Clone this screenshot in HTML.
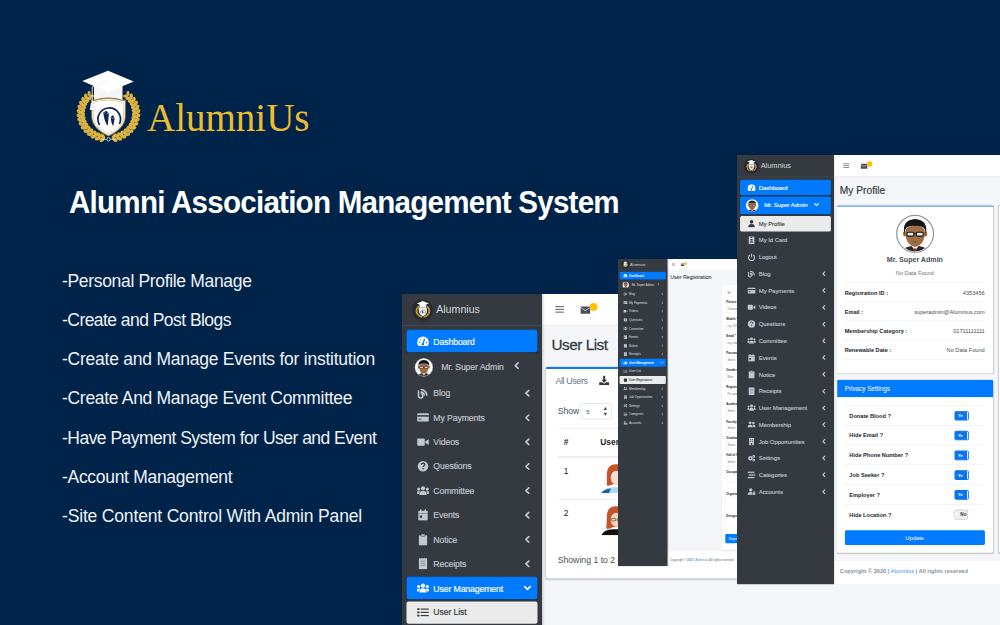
<!DOCTYPE html>
<html><head><meta charset="utf-8"><style>
*{box-sizing:border-box}
html,body{margin:0;padding:0}
body{width:1000px;height:625px;overflow:hidden;background:#00234a;position:relative;font-family:"Liberation Sans",sans-serif}
.ic{position:absolute;overflow:visible}
.brandtxt{position:absolute;left:147px;top:95.5px;font-family:"Liberation Serif",serif;font-size:39px;color:#ecbd2c;line-height:43px;white-space:nowrap}
.heading{position:absolute;left:68.5px;top:186px;font-size:31px;font-weight:bold;color:#fff;white-space:nowrap;letter-spacing:-0.8px;line-height:33px;transform:scaleX(0.954);transform-origin:0 0}
.bul{position:absolute;left:62px;font-size:17.5px;color:#eef2f7;white-space:nowrap;line-height:19px;letter-spacing:-0.4px}
.ss{position:absolute;transform-origin:0 0;overflow:hidden;background:#f4f6f9}
.sb{position:absolute;left:0;top:0;width:250px;background:#343a40;box-shadow:1px 0 6px rgba(0,0,0,.35)}
.brand{height:57px;border-bottom:1px solid #4b545c;position:relative}
.bt{position:absolute;left:61px;top:16px;font-size:19px;color:rgba(255,255,255,.8);line-height:24px}
.nav{padding:7.3px 8px 0}
.it{height:40px;margin-bottom:3.5px;border-radius:4px;position:relative;color:#c2c7d0}
.it.user{height:46px}
.s3 .it{margin-bottom:3.2px}
.it .t{position:absolute;left:48px;top:11.5px;font-size:15.5px;letter-spacing:-0.2px;line-height:18px;white-space:nowrap;-webkit-text-stroke:0.3px currentColor}
.it.user .t{top:12.8px}
.it.act .t{top:12.5px}
.it.act{background:#007bff;color:#fff;box-shadow:0 1px 3px rgba(0,0,0,.12),0 1px 2px rgba(0,0,0,.24)}
.it.sub{background:rgba(255,255,255,.9);color:#343a40}
.main{position:absolute;top:0;right:0;bottom:0;background:#f4f6f9}
.nb{position:relative;background:#fff;border-bottom:1px solid #dee2e6}
.badge{position:absolute;left:85px;top:16px;width:14px;height:14px;border-radius:7px;background:#ffc107}
.h1{position:absolute;color:#343a40;line-height:30px;white-space:nowrap;-webkit-text-stroke:0.45px #343a40}
.card{position:absolute;background:#fff;border-radius:4px;box-shadow:0 0 1px rgba(0,0,0,.125),0 1px 3px rgba(0,0,0,.2)}
.tx{position:absolute;white-space:nowrap;line-height:18px}
.hr{position:absolute;border-top:1px solid #dee2e6;height:0}
.sel,.inp{position:absolute;border:1px solid #ced4da;border-radius:4px;background:#fff}
.btn{position:absolute;background:#007bff;color:#fff;border-radius:4px;text-align:center}
.ctr{position:absolute;left:0;width:100%;text-align:center;line-height:22px;white-space:nowrap}
.phead{position:absolute;left:0;top:0;width:100%;height:45px;background:#007bff}
.tog{position:absolute;width:34px;height:22px;background:#0a74ec;border-radius:3px;border-right:3px solid #fff;box-shadow:0 0 0 1.5px #0a74ec}
.tog span{position:absolute;left:8px;top:4px;font-size:11px;font-weight:bold;color:#fff;line-height:14px}
.tog.off{width:32px;background:#f1f1f1;border-right:none;border-left:4px solid #fff;box-shadow:0 0 0 1.5px #bbb}
.tog.off span{left:10px;top:3.5px;font-size:12px;color:#333}
.foot{position:absolute;left:0;right:0;background:#fff;border-top:1px solid #dee2e6}
</style></head><body>

<svg width="0" height="0" style="position:absolute">
<defs>
<symbol id="i-dash" viewBox="0 0 20 20"><path d="M10,2 A10,10 0 0 0 0,12 Q0,15.5 2.2,18 L17.8,18 Q20,15.5 20,12 A10,10 0 0 0 10,2 Z" fill="currentColor"/><circle cx="4.2" cy="12" r="1.1" fill="#007bff"/><circle cx="6" cy="7.5" r="1.1" fill="#007bff"/><circle cx="15.8" cy="12" r="1.1" fill="#007bff"/><path d="M9.5,15 L12.5,6.5" stroke="#007bff" stroke-width="2.2" stroke-linecap="round"/><circle cx="9.5" cy="15" r="2" fill="#007bff"/></symbol>
<symbol id="i-blog" viewBox="0 0 20 20"><path d="M2.3,5 L2.3,14 A3.7,3.7 0 1 0 6,10.3" fill="none" stroke="currentColor" stroke-width="2.6"/><path d="M6,2 A12,12 0 0 1 18,14 L15.2,14 A9.2,9.2 0 0 0 6,4.8 Z" fill="currentColor"/><path d="M6,6.4 A7.6,7.6 0 0 1 13.6,14 L10.9,14 A4.9,4.9 0 0 0 6,9.1 Z" fill="currentColor"/></symbol>
<symbol id="i-card" viewBox="0 0 20 20"><rect x="0" y="3" width="20" height="14" rx="1.5" fill="currentColor"/><rect x="0" y="6" width="20" height="2.6" fill="#343a40"/><rect x="2.5" y="12" width="5" height="1.6" fill="#343a40"/></symbol>
<symbol id="i-video" viewBox="0 0 20 20"><rect x="0" y="4" width="13" height="12" rx="1.5" fill="currentColor"/><path d="M14,8.5 L20,5 L20,15 L14,11.5 Z" fill="currentColor"/></symbol>
<symbol id="i-quest" viewBox="0 0 20 20"><circle cx="10" cy="10" r="9" fill="currentColor"/><path d="M7.2,7.6 Q7.4,4.8 10.2,4.8 Q13,4.9 13,7.3 Q13,9 11,9.8 Q10.2,10.3 10.2,11.5" fill="none" stroke="#343a40" stroke-width="2"/><circle cx="10.2" cy="14.5" r="1.3" fill="#343a40"/></symbol>
<symbol id="i-users" viewBox="0 0 20 20"><circle cx="10" cy="5.6" r="3.6" fill="currentColor"/><circle cx="2.6" cy="7" r="2.7" fill="currentColor"/><circle cx="17.4" cy="7" r="2.7" fill="currentColor"/><path d="M4,17 Q4,10 10,10 Q16,10 16,17 Z" fill="currentColor"/><path d="M-2.5,15.5 Q-2.5,10.5 2.8,10.5 Q4.5,10.5 5.2,11.2 Q3.2,13 3.2,15.5 Z" fill="currentColor"/><path d="M22.5,15.5 Q22.5,10.5 17.2,10.5 Q15.5,10.5 14.8,11.2 Q16.8,13 16.8,15.5 Z" fill="currentColor"/></symbol>
<symbol id="i-cal" viewBox="0 0 20 20"><rect x="2" y="3" width="16" height="16.5" rx="1.5" fill="currentColor"/><rect x="5" y="0.5" width="2.4" height="4" rx="1" fill="currentColor"/><rect x="12.6" y="0.5" width="2.4" height="4" rx="1" fill="currentColor"/><rect x="2" y="7" width="16" height="1" fill="#343a40" opacity=".6"/><rect x="4.5" y="11" width="4" height="4" fill="#343a40"/></symbol>
<symbol id="i-clip" viewBox="0 0 20 20"><rect x="3" y="2.5" width="14" height="17.5" rx="1.5" fill="currentColor"/><rect x="6.5" y="0.5" width="7" height="4" rx="1.5" fill="currentColor" stroke="#343a40" stroke-width="1"/></symbol>
<symbol id="i-receipt" viewBox="0 0 20 20"><rect x="3" y="1" width="14" height="18.5" rx="1" fill="currentColor"/><rect x="6" y="5" width="8" height="1.2" fill="#343a40" opacity=".5"/><rect x="6" y="8.5" width="8" height="1.2" fill="#343a40" opacity=".5"/><rect x="6" y="12" width="8" height="1.2" fill="#343a40" opacity=".5"/></symbol>
<symbol id="i-list" viewBox="0 0 20 20"><rect x="0" y="3" width="4" height="3" fill="currentColor"/><rect x="0" y="8.5" width="4" height="3" fill="currentColor"/><rect x="0" y="14" width="4" height="3" fill="currentColor"/><rect x="6" y="3.5" width="14" height="2" fill="currentColor"/><rect x="6" y="9" width="14" height="2" fill="currentColor"/><rect x="6" y="14.5" width="14" height="2" fill="currentColor"/></symbol>
<symbol id="i-user" viewBox="0 0 20 20"><circle cx="10" cy="6" r="4.5" fill="currentColor"/><path d="M2,19 Q2,11.5 10,11.5 Q18,11.5 18,19 Z" fill="currentColor"/></symbol>
<symbol id="i-ucirc" viewBox="0 0 20 20"><circle cx="10" cy="10" r="9" fill="currentColor"/><circle cx="10" cy="8" r="3" fill="#343a40"/><path d="M4.5,16 Q5,12 10,12 Q15,12 15.5,16 Z" fill="#343a40"/></symbol>
<symbol id="i-friends" viewBox="0 0 20 20"><circle cx="6.5" cy="6" r="3.5" fill="currentColor"/><circle cx="14.5" cy="6.5" r="3" fill="currentColor"/><path d="M0,17 Q0,11 6.5,11 Q13,11 13,17 Z" fill="currentColor"/><path d="M14,17 Q14,13 12.5,11.5 Q13.5,11 14.5,11 Q20,11 20,17 Z" fill="currentColor"/></symbol>
<symbol id="i-build" viewBox="0 0 20 20"><rect x="4" y="1" width="12" height="19" rx="1" fill="currentColor"/><rect x="6.5" y="4" width="2" height="2" fill="#343a40"/><rect x="11.5" y="4" width="2" height="2" fill="#343a40"/><rect x="6.5" y="8" width="2" height="2" fill="#343a40"/><rect x="11.5" y="8" width="2" height="2" fill="#343a40"/><rect x="8.5" y="14" width="3" height="6" fill="#343a40"/></symbol>
<symbol id="i-cogs" viewBox="0 0 20 20"><circle cx="7" cy="10" r="5.5" fill="currentColor"/><circle cx="7" cy="10" r="2" fill="#343a40"/><circle cx="15.5" cy="5.5" r="3.5" fill="currentColor"/><circle cx="15.5" cy="14.5" r="3.5" fill="currentColor"/><circle cx="15.5" cy="5.5" r="1.2" fill="#343a40"/><circle cx="15.5" cy="14.5" r="1.2" fill="#343a40"/></symbol>
<symbol id="i-stream" viewBox="0 0 20 20"><rect x="0" y="2" width="17" height="3" fill="currentColor"/><rect x="3" y="8.5" width="17" height="3" fill="currentColor"/><rect x="0" y="15" width="17" height="3" fill="currentColor"/></symbol>
<symbol id="i-acct" viewBox="0 0 20 20"><circle cx="8" cy="6" r="4" fill="currentColor"/><path d="M0,18 Q0,11 8,11 Q11,11 12,12 L12,18 Z" fill="currentColor"/><rect x="13" y="12" width="7" height="6" fill="currentColor"/><path d="M14.5,12 L14.5,10.5 A2,2 0 0 1 18.5,10.5 L18.5,12" fill="none" stroke="currentColor" stroke-width="1.3"/></symbol>
<symbol id="i-id" viewBox="0 0 20 20"><rect x="3" y="1" width="14" height="19" rx="1.5" fill="currentColor"/><rect x="8" y="2" width="4" height="2" fill="#343a40"/><circle cx="10" cy="9" r="2.5" fill="#343a40"/><path d="M5.5,16 Q6,12.5 10,12.5 Q14,12.5 14.5,16 Z" fill="#343a40"/></symbol>
<symbol id="i-power" viewBox="0 0 20 20"><path d="M6,4.5 A7.5,7.5 0 1 0 14,4.5" fill="none" stroke="currentColor" stroke-width="2.6"/><rect x="8.7" y="1" width="2.6" height="9" rx="1" fill="currentColor"/></symbol>
<symbol id="i-left" viewBox="0 0 20 20"><path d="M13.5,3 L6,10 L13.5,17" fill="none" stroke="currentColor" stroke-width="4.2" stroke-linejoin="round" stroke-linecap="round"/></symbol>
<symbol id="i-down" viewBox="0 0 20 20"><path d="M3,6.5 L10,13.5 L17,6.5" fill="none" stroke="currentColor" stroke-width="4.2" stroke-linejoin="round" stroke-linecap="round"/></symbol>
<symbol id="i-ham" viewBox="0 0 20 20"><rect x="1" y="3" width="18" height="2.4" fill="currentColor"/><rect x="1" y="8.8" width="18" height="2.4" fill="currentColor"/><rect x="1" y="14.6" width="18" height="2.4" fill="currentColor"/></symbol>
<symbol id="i-mail" viewBox="0 0 20 20"><path d="M1,6 L10,12 L19,6 L19,17 L1,17 Z" fill="currentColor"/><path d="M1,3.5 L19,3.5 L19,4.8 L10,10.5 L1,4.8 Z" fill="currentColor"/></symbol>
<symbol id="i-dl" viewBox="0 0 20 20"><rect x="8" y="1" width="4" height="9" fill="currentColor"/><path d="M4,9 L16,9 L10,15 Z" fill="currentColor"/><path d="M0,14 L6,14 L10,17 L14,14 L20,14 L20,20 L0,20 Z" fill="currentColor"/></symbol>
<symbol id="i-man" viewBox="0 0 100 100"><circle cx="50" cy="50" r="47.5" fill="#fff" stroke="#8f969c" stroke-width="3"/>
<clipPath id="cpm"><circle cx="50" cy="50" r="45"/></clipPath>
<g clip-path="url(#cpm)"><path d="M14,100 Q18,82 50,80 Q82,82 86,100 Z" fill="#25282d"/><path d="M40,80 L50,94 L60,80 Z" fill="#fff"/><circle cx="50" cy="91" r="3.5" fill="#d81f26"/>
<ellipse cx="23" cy="50" rx="4" ry="7" fill="#8f5f3a"/><ellipse cx="77" cy="50" rx="4" ry="7" fill="#8f5f3a"/>
<path d="M25,45 Q25,80 50,84 Q75,80 75,45 Q75,30 50,28 Q25,30 25,45 Z" fill="#a06e45"/>
<path d="M22,50 Q16,14 50,12 Q84,14 78,50 Q76,38 72,34 Q60,28 50,30 Q38,28 28,34 Q24,38 22,50 Z" fill="#151515"/>
<rect x="29" y="46" width="18" height="10" rx="3" fill="#e8e8e8" stroke="#151515" stroke-width="3"/><rect x="53" y="46" width="18" height="10" rx="3" fill="#e8e8e8" stroke="#151515" stroke-width="3"/><path d="M47,50 L53,50" stroke="#151515" stroke-width="2.5"/>
<path d="M44,70 Q50,73 56,70" stroke="#6b4428" stroke-width="2" fill="none"/></g></symbol>
<symbol id="i-woman" viewBox="0 0 100 100"><path d="M2,100 Q8,82 40,80 L60,80 Q92,82 98,100 Z" fill="#111"/><path d="M20,45 Q18,2 52,4 Q84,6 82,45 L84,78 Q70,80 62,72 L40,72 Q30,80 18,78 Z" fill="#c4542a"/><ellipse cx="52" cy="48" rx="19" ry="24" fill="#f6d2b8"/><path d="M30,40 Q34,12 56,14 Q76,16 74,40 Q62,22 44,26 Q36,30 30,40 Z" fill="#c4542a"/><rect x="36" y="44" width="13" height="8" rx="2" fill="none" stroke="#333" stroke-width="2"/><rect x="54" y="44" width="13" height="8" rx="2" fill="none" stroke="#333" stroke-width="2"/></symbol>
<symbol id="i-woman2" viewBox="0 0 100 100"><path d="M2,100 Q8,82 40,80 L60,80 Q92,82 98,100 Z" fill="#a9dcef"/><path d="M0,100 Q10,86 34,84 L26,100 Z" fill="#1d5fa8"/><path d="M20,45 Q18,2 52,4 Q84,6 82,45 L82,74 Q70,76 62,70 L40,70 Q30,76 20,74 Z" fill="#c4542a"/><ellipse cx="52" cy="48" rx="19" ry="24" fill="#f9ddd0"/><path d="M30,40 Q34,12 56,14 Q76,16 74,40 Q62,22 44,26 Q36,30 30,40 Z" fill="#c4542a"/></symbol>
<symbol id="i-logo" viewBox="70 62 75 82">
<g fill="#dcb243"><ellipse cx="89.05" cy="93.50" rx="2.63" ry="1.53" transform="rotate(-84.4 89.05 93.50)"/>
<ellipse cx="91.41" cy="95.95" rx="2.63" ry="1.53" transform="rotate(-0.5 91.41 95.95)"/>
<ellipse cx="85.87" cy="96.51" rx="3.10" ry="1.80" transform="rotate(-93.5 85.87 96.51)"/>
<ellipse cx="88.58" cy="98.56" rx="3.10" ry="1.80" transform="rotate(-9.5 88.58 98.56)"/>
<ellipse cx="83.24" cy="99.93" rx="3.10" ry="1.80" transform="rotate(-102.7 83.24 99.93)"/>
<ellipse cx="86.24" cy="101.53" rx="3.10" ry="1.80" transform="rotate(-18.7 86.24 101.53)"/>
<ellipse cx="81.22" cy="103.69" rx="3.10" ry="1.80" transform="rotate(-112.0 81.22 103.69)"/>
<ellipse cx="84.44" cy="104.79" rx="3.10" ry="1.80" transform="rotate(-28.0 84.44 104.79)"/>
<ellipse cx="79.87" cy="107.69" rx="3.10" ry="1.80" transform="rotate(-121.4 79.87 107.69)"/>
<ellipse cx="83.22" cy="108.28" rx="3.10" ry="1.80" transform="rotate(-37.5 83.22 108.28)"/>
<ellipse cx="79.23" cy="111.83" rx="3.10" ry="1.80" transform="rotate(-130.9 79.23 111.83)"/>
<ellipse cx="82.63" cy="111.89" rx="3.10" ry="1.80" transform="rotate(-47.0 82.63 111.89)"/>
<ellipse cx="79.30" cy="116.03" rx="3.10" ry="1.80" transform="rotate(-140.4 79.30 116.03)"/>
<ellipse cx="82.67" cy="115.56" rx="3.10" ry="1.80" transform="rotate(-56.5 82.67 115.56)"/>
<ellipse cx="80.10" cy="120.17" rx="3.10" ry="1.80" transform="rotate(-149.9 80.10 120.17)"/>
<ellipse cx="83.35" cy="119.18" rx="3.10" ry="1.80" transform="rotate(-65.9 83.35 119.18)"/>
<ellipse cx="81.60" cy="124.15" rx="3.10" ry="1.80" transform="rotate(-159.3 81.60 124.15)"/>
<ellipse cx="84.65" cy="122.66" rx="3.10" ry="1.80" transform="rotate(-75.3 84.65 122.66)"/>
<ellipse cx="83.76" cy="127.87" rx="3.10" ry="1.80" transform="rotate(-168.5 83.76 127.87)"/>
<ellipse cx="86.55" cy="125.91" rx="3.10" ry="1.80" transform="rotate(-84.5 86.55 125.91)"/>
<ellipse cx="86.55" cy="131.23" rx="3.10" ry="1.80" transform="rotate(-177.5 86.55 131.23)"/>
<ellipse cx="88.99" cy="128.86" rx="3.10" ry="1.80" transform="rotate(-93.6 88.99 128.86)"/>
<ellipse cx="89.88" cy="134.15" rx="3.10" ry="1.80" transform="rotate(173.5 89.88 134.15)"/>
<ellipse cx="91.92" cy="131.43" rx="3.10" ry="1.80" transform="rotate(-102.5 91.92 131.43)"/>
<ellipse cx="93.66" cy="136.55" rx="3.10" ry="1.80" transform="rotate(164.8 93.66 136.55)"/>
<ellipse cx="95.26" cy="133.55" rx="3.10" ry="1.80" transform="rotate(-111.3 95.26 133.55)"/>
<ellipse cx="97.82" cy="138.39" rx="3.10" ry="1.80" transform="rotate(156.1 97.82 138.39)"/>
<ellipse cx="98.92" cy="135.17" rx="3.10" ry="1.80" transform="rotate(-119.9 98.92 135.17)"/>
<ellipse cx="102.23" cy="139.61" rx="3.10" ry="1.80" transform="rotate(147.5 102.23 139.61)"/>
<ellipse cx="102.82" cy="136.26" rx="3.10" ry="1.80" transform="rotate(-128.5 102.82 136.26)"/>
<ellipse cx="127.95" cy="93.50" rx="2.63" ry="1.53" transform="rotate(-95.6 127.95 93.50)"/>
<ellipse cx="125.59" cy="95.95" rx="2.63" ry="1.53" transform="rotate(-179.5 125.59 95.95)"/>
<ellipse cx="131.13" cy="96.51" rx="3.10" ry="1.80" transform="rotate(-86.5 131.13 96.51)"/>
<ellipse cx="128.42" cy="98.56" rx="3.10" ry="1.80" transform="rotate(-170.5 128.42 98.56)"/>
<ellipse cx="133.76" cy="99.93" rx="3.10" ry="1.80" transform="rotate(-77.3 133.76 99.93)"/>
<ellipse cx="130.76" cy="101.53" rx="3.10" ry="1.80" transform="rotate(-161.3 130.76 101.53)"/>
<ellipse cx="135.78" cy="103.69" rx="3.10" ry="1.80" transform="rotate(-68.0 135.78 103.69)"/>
<ellipse cx="132.56" cy="104.79" rx="3.10" ry="1.80" transform="rotate(-152.0 132.56 104.79)"/>
<ellipse cx="137.13" cy="107.69" rx="3.10" ry="1.80" transform="rotate(-58.6 137.13 107.69)"/>
<ellipse cx="133.78" cy="108.28" rx="3.10" ry="1.80" transform="rotate(-142.5 133.78 108.28)"/>
<ellipse cx="137.77" cy="111.83" rx="3.10" ry="1.80" transform="rotate(-49.1 137.77 111.83)"/>
<ellipse cx="134.37" cy="111.89" rx="3.10" ry="1.80" transform="rotate(-133.0 134.37 111.89)"/>
<ellipse cx="137.70" cy="116.03" rx="3.10" ry="1.80" transform="rotate(-39.6 137.70 116.03)"/>
<ellipse cx="134.33" cy="115.56" rx="3.10" ry="1.80" transform="rotate(-123.5 134.33 115.56)"/>
<ellipse cx="136.90" cy="120.17" rx="3.10" ry="1.80" transform="rotate(-30.1 136.90 120.17)"/>
<ellipse cx="133.65" cy="119.18" rx="3.10" ry="1.80" transform="rotate(-114.1 133.65 119.18)"/>
<ellipse cx="135.40" cy="124.15" rx="3.10" ry="1.80" transform="rotate(-20.7 135.40 124.15)"/>
<ellipse cx="132.35" cy="122.66" rx="3.10" ry="1.80" transform="rotate(-104.7 132.35 122.66)"/>
<ellipse cx="133.24" cy="127.87" rx="3.10" ry="1.80" transform="rotate(-11.5 133.24 127.87)"/>
<ellipse cx="130.45" cy="125.91" rx="3.10" ry="1.80" transform="rotate(-95.5 130.45 125.91)"/>
<ellipse cx="130.45" cy="131.23" rx="3.10" ry="1.80" transform="rotate(-2.5 130.45 131.23)"/>
<ellipse cx="128.01" cy="128.86" rx="3.10" ry="1.80" transform="rotate(-86.4 128.01 128.86)"/>
<ellipse cx="127.12" cy="134.15" rx="3.10" ry="1.80" transform="rotate(6.5 127.12 134.15)"/>
<ellipse cx="125.08" cy="131.43" rx="3.10" ry="1.80" transform="rotate(-77.5 125.08 131.43)"/>
<ellipse cx="123.34" cy="136.55" rx="3.10" ry="1.80" transform="rotate(15.2 123.34 136.55)"/>
<ellipse cx="121.74" cy="133.55" rx="3.10" ry="1.80" transform="rotate(-68.7 121.74 133.55)"/>
<ellipse cx="119.18" cy="138.39" rx="3.10" ry="1.80" transform="rotate(23.9 119.18 138.39)"/>
<ellipse cx="118.08" cy="135.17" rx="3.10" ry="1.80" transform="rotate(-60.1 118.08 135.17)"/>
<ellipse cx="114.77" cy="139.61" rx="3.10" ry="1.80" transform="rotate(32.5 114.77 139.61)"/>
<ellipse cx="114.18" cy="136.26" rx="3.10" ry="1.80" transform="rotate(-51.5 114.18 136.26)"/>
</g>
<path d="M101,139.3 L106.5,139.3 M110.5,139.3 L116,139.3" stroke="#e8e8e8" stroke-width="0.7" fill="none"/>
<circle cx="108.5" cy="139.3" r="1.7" fill="none" stroke="#e8e8e8" stroke-width="0.8"/>
<path d="M91,100 Q108.5,95.5 126,100 L125.8,117 Q125,129 108.5,136.5 Q92,129 91.2,117 Z" fill="#8e7a44"/>
<path d="M92,101.2 Q108.5,96.8 125,101.2 L124.8,117 Q124,128.3 108.5,135.4 Q93,128.3 92.2,117 Z" fill="#fff"/>
<path d="M93.2,102.3 Q108.5,98.2 123.8,102.3 L123.6,117 Q123,127.5 108.5,134.2 Q94,127.5 93.4,117 Z" fill="none" stroke="#c9a94e" stroke-width="0.5"/>
<path d="M99.5,125 A11.3,11.3 0 1 1 119.5,124" fill="none" stroke="#0b2550" stroke-width="1.7"/>
<circle cx="106" cy="112.6" r="1.7" fill="#0b2550"/>
<path d="M103.2,111.5 Q105.8,116 109.2,112.8 L108.6,116 Q108.2,122 107.6,126 Q104,121 103.2,111.5 Z" fill="#0b2550"/>
<circle cx="112.6" cy="117" r="1.4" fill="#0b2550"/>
<path d="M110.6,117 Q112.6,120 114.8,117.6 L113.3,126 Q111.2,124 110.6,117 Z" fill="#0b2550"/>
<path d="M94,85 L94,100.5 Q108.5,96 122.5,100.5 L122.5,85 Z" fill="#f6f6f6"/>
<path d="M94,100.3 Q108.5,95.8 122.5,100.3" stroke="#8e7a44" stroke-width="1.1" fill="none"/>
<path d="M82.3,81 L108,70.8 L133.7,81.5 L108,92.3 Z" fill="#fff"/>
<path d="M108,81.5 L92.2,87 L92.2,104" stroke="#f0f0f0" stroke-width="0.9" fill="none"/>
<path d="M90.8,103 L93.6,103 L94.2,110 L89.8,110 Z" fill="#f0f0f0"/>
</symbol>
</defs></svg>

<svg id="biglogo" width="75" height="82" viewBox="70 62 75 82" style="position:absolute;left:70px;top:62px">
<g fill="#dcb243"><ellipse cx="89.05" cy="93.50" rx="2.63" ry="1.53" transform="rotate(-84.4 89.05 93.50)"/>
<ellipse cx="91.41" cy="95.95" rx="2.63" ry="1.53" transform="rotate(-0.5 91.41 95.95)"/>
<ellipse cx="85.87" cy="96.51" rx="3.10" ry="1.80" transform="rotate(-93.5 85.87 96.51)"/>
<ellipse cx="88.58" cy="98.56" rx="3.10" ry="1.80" transform="rotate(-9.5 88.58 98.56)"/>
<ellipse cx="83.24" cy="99.93" rx="3.10" ry="1.80" transform="rotate(-102.7 83.24 99.93)"/>
<ellipse cx="86.24" cy="101.53" rx="3.10" ry="1.80" transform="rotate(-18.7 86.24 101.53)"/>
<ellipse cx="81.22" cy="103.69" rx="3.10" ry="1.80" transform="rotate(-112.0 81.22 103.69)"/>
<ellipse cx="84.44" cy="104.79" rx="3.10" ry="1.80" transform="rotate(-28.0 84.44 104.79)"/>
<ellipse cx="79.87" cy="107.69" rx="3.10" ry="1.80" transform="rotate(-121.4 79.87 107.69)"/>
<ellipse cx="83.22" cy="108.28" rx="3.10" ry="1.80" transform="rotate(-37.5 83.22 108.28)"/>
<ellipse cx="79.23" cy="111.83" rx="3.10" ry="1.80" transform="rotate(-130.9 79.23 111.83)"/>
<ellipse cx="82.63" cy="111.89" rx="3.10" ry="1.80" transform="rotate(-47.0 82.63 111.89)"/>
<ellipse cx="79.30" cy="116.03" rx="3.10" ry="1.80" transform="rotate(-140.4 79.30 116.03)"/>
<ellipse cx="82.67" cy="115.56" rx="3.10" ry="1.80" transform="rotate(-56.5 82.67 115.56)"/>
<ellipse cx="80.10" cy="120.17" rx="3.10" ry="1.80" transform="rotate(-149.9 80.10 120.17)"/>
<ellipse cx="83.35" cy="119.18" rx="3.10" ry="1.80" transform="rotate(-65.9 83.35 119.18)"/>
<ellipse cx="81.60" cy="124.15" rx="3.10" ry="1.80" transform="rotate(-159.3 81.60 124.15)"/>
<ellipse cx="84.65" cy="122.66" rx="3.10" ry="1.80" transform="rotate(-75.3 84.65 122.66)"/>
<ellipse cx="83.76" cy="127.87" rx="3.10" ry="1.80" transform="rotate(-168.5 83.76 127.87)"/>
<ellipse cx="86.55" cy="125.91" rx="3.10" ry="1.80" transform="rotate(-84.5 86.55 125.91)"/>
<ellipse cx="86.55" cy="131.23" rx="3.10" ry="1.80" transform="rotate(-177.5 86.55 131.23)"/>
<ellipse cx="88.99" cy="128.86" rx="3.10" ry="1.80" transform="rotate(-93.6 88.99 128.86)"/>
<ellipse cx="89.88" cy="134.15" rx="3.10" ry="1.80" transform="rotate(173.5 89.88 134.15)"/>
<ellipse cx="91.92" cy="131.43" rx="3.10" ry="1.80" transform="rotate(-102.5 91.92 131.43)"/>
<ellipse cx="93.66" cy="136.55" rx="3.10" ry="1.80" transform="rotate(164.8 93.66 136.55)"/>
<ellipse cx="95.26" cy="133.55" rx="3.10" ry="1.80" transform="rotate(-111.3 95.26 133.55)"/>
<ellipse cx="97.82" cy="138.39" rx="3.10" ry="1.80" transform="rotate(156.1 97.82 138.39)"/>
<ellipse cx="98.92" cy="135.17" rx="3.10" ry="1.80" transform="rotate(-119.9 98.92 135.17)"/>
<ellipse cx="102.23" cy="139.61" rx="3.10" ry="1.80" transform="rotate(147.5 102.23 139.61)"/>
<ellipse cx="102.82" cy="136.26" rx="3.10" ry="1.80" transform="rotate(-128.5 102.82 136.26)"/>
<ellipse cx="127.95" cy="93.50" rx="2.63" ry="1.53" transform="rotate(-95.6 127.95 93.50)"/>
<ellipse cx="125.59" cy="95.95" rx="2.63" ry="1.53" transform="rotate(-179.5 125.59 95.95)"/>
<ellipse cx="131.13" cy="96.51" rx="3.10" ry="1.80" transform="rotate(-86.5 131.13 96.51)"/>
<ellipse cx="128.42" cy="98.56" rx="3.10" ry="1.80" transform="rotate(-170.5 128.42 98.56)"/>
<ellipse cx="133.76" cy="99.93" rx="3.10" ry="1.80" transform="rotate(-77.3 133.76 99.93)"/>
<ellipse cx="130.76" cy="101.53" rx="3.10" ry="1.80" transform="rotate(-161.3 130.76 101.53)"/>
<ellipse cx="135.78" cy="103.69" rx="3.10" ry="1.80" transform="rotate(-68.0 135.78 103.69)"/>
<ellipse cx="132.56" cy="104.79" rx="3.10" ry="1.80" transform="rotate(-152.0 132.56 104.79)"/>
<ellipse cx="137.13" cy="107.69" rx="3.10" ry="1.80" transform="rotate(-58.6 137.13 107.69)"/>
<ellipse cx="133.78" cy="108.28" rx="3.10" ry="1.80" transform="rotate(-142.5 133.78 108.28)"/>
<ellipse cx="137.77" cy="111.83" rx="3.10" ry="1.80" transform="rotate(-49.1 137.77 111.83)"/>
<ellipse cx="134.37" cy="111.89" rx="3.10" ry="1.80" transform="rotate(-133.0 134.37 111.89)"/>
<ellipse cx="137.70" cy="116.03" rx="3.10" ry="1.80" transform="rotate(-39.6 137.70 116.03)"/>
<ellipse cx="134.33" cy="115.56" rx="3.10" ry="1.80" transform="rotate(-123.5 134.33 115.56)"/>
<ellipse cx="136.90" cy="120.17" rx="3.10" ry="1.80" transform="rotate(-30.1 136.90 120.17)"/>
<ellipse cx="133.65" cy="119.18" rx="3.10" ry="1.80" transform="rotate(-114.1 133.65 119.18)"/>
<ellipse cx="135.40" cy="124.15" rx="3.10" ry="1.80" transform="rotate(-20.7 135.40 124.15)"/>
<ellipse cx="132.35" cy="122.66" rx="3.10" ry="1.80" transform="rotate(-104.7 132.35 122.66)"/>
<ellipse cx="133.24" cy="127.87" rx="3.10" ry="1.80" transform="rotate(-11.5 133.24 127.87)"/>
<ellipse cx="130.45" cy="125.91" rx="3.10" ry="1.80" transform="rotate(-95.5 130.45 125.91)"/>
<ellipse cx="130.45" cy="131.23" rx="3.10" ry="1.80" transform="rotate(-2.5 130.45 131.23)"/>
<ellipse cx="128.01" cy="128.86" rx="3.10" ry="1.80" transform="rotate(-86.4 128.01 128.86)"/>
<ellipse cx="127.12" cy="134.15" rx="3.10" ry="1.80" transform="rotate(6.5 127.12 134.15)"/>
<ellipse cx="125.08" cy="131.43" rx="3.10" ry="1.80" transform="rotate(-77.5 125.08 131.43)"/>
<ellipse cx="123.34" cy="136.55" rx="3.10" ry="1.80" transform="rotate(15.2 123.34 136.55)"/>
<ellipse cx="121.74" cy="133.55" rx="3.10" ry="1.80" transform="rotate(-68.7 121.74 133.55)"/>
<ellipse cx="119.18" cy="138.39" rx="3.10" ry="1.80" transform="rotate(23.9 119.18 138.39)"/>
<ellipse cx="118.08" cy="135.17" rx="3.10" ry="1.80" transform="rotate(-60.1 118.08 135.17)"/>
<ellipse cx="114.77" cy="139.61" rx="3.10" ry="1.80" transform="rotate(32.5 114.77 139.61)"/>
<ellipse cx="114.18" cy="136.26" rx="3.10" ry="1.80" transform="rotate(-51.5 114.18 136.26)"/>
</g>
<path d="M101,139.3 L106.5,139.3 M110.5,139.3 L116,139.3" stroke="#e8e8e8" stroke-width="0.7" fill="none"/>
<circle cx="108.5" cy="139.3" r="1.7" fill="none" stroke="#e8e8e8" stroke-width="0.8"/>
<path d="M91,100 Q108.5,95.5 126,100 L125.8,117 Q125,129 108.5,136.5 Q92,129 91.2,117 Z" fill="#8e7a44"/>
<path d="M92,101.2 Q108.5,96.8 125,101.2 L124.8,117 Q124,128.3 108.5,135.4 Q93,128.3 92.2,117 Z" fill="#fff"/>
<path d="M93.2,102.3 Q108.5,98.2 123.8,102.3 L123.6,117 Q123,127.5 108.5,134.2 Q94,127.5 93.4,117 Z" fill="none" stroke="#c9a94e" stroke-width="0.5"/>
<path d="M99.5,125 A11.3,11.3 0 1 1 119.5,124" fill="none" stroke="#0b2550" stroke-width="1.7"/>
<circle cx="106" cy="112.6" r="1.7" fill="#0b2550"/>
<path d="M103.2,111.5 Q105.8,116 109.2,112.8 L108.6,116 Q108.2,122 107.6,126 Q104,121 103.2,111.5 Z" fill="#0b2550"/>
<circle cx="112.6" cy="117" r="1.4" fill="#0b2550"/>
<path d="M110.6,117 Q112.6,120 114.8,117.6 L113.3,126 Q111.2,124 110.6,117 Z" fill="#0b2550"/>
<path d="M94,85 L94,100.5 Q108.5,96 122.5,100.5 L122.5,85 Z" fill="#f6f6f6"/>
<path d="M94,100.3 Q108.5,95.8 122.5,100.3" stroke="#8e7a44" stroke-width="1.1" fill="none"/>
<path d="M82.3,81 L108,70.8 L133.7,81.5 L108,92.3 Z" fill="#fff"/>
<path d="M108,81.5 L92.2,87 L92.2,104" stroke="#f0f0f0" stroke-width="0.9" fill="none"/>
<path d="M90.8,103 L93.6,103 L94.2,110 L89.8,110 Z" fill="#f0f0f0"/>
</svg>
<div class="brandtxt">AlumniUs</div>
<div class="heading">Alumni Association Management System</div>
<div class="bul" style="top:271.5px;letter-spacing:-0.329px">-Personal Profile Manage</div><div class="bul" style="top:310.8px;letter-spacing:-0.545px">-Create and Post Blogs</div><div class="bul" style="top:350.1px;letter-spacing:-0.241px">-Create and Manage Events for institution</div><div class="bul" style="top:389.4px;letter-spacing:-0.306px">-Create And Manage Event Committee</div><div class="bul" style="top:428.7px;letter-spacing:-0.521px">-Have Payment System for User and Event</div><div class="bul" style="top:468.0px;letter-spacing:-0.3px">-Account Management</div><div class="bul" style="top:507.3px;letter-spacing:-0.168px">-Site Content Control With Admin Panel</div>
<div class="ss" style="left:402px;top:294px;width:1070px;height:592px;transform:scale(0.56)">
<div class="main" style="left:250px"><div class="nb" style="height:57px"><svg class="ic" style="left:23px;top:19px;width:17px;height:17px;color:#6c757d;"><use href="#i-ham"/></svg><svg class="ic" style="left:68px;top:19px;width:19px;height:19px;color:#495057;"><use href="#i-mail"/></svg><div class="badge"></div></div>
<div class="h1" style="left:17px;top:76px;font-size:27.5px;letter-spacing:-0.95px">User List</div>
<div class="card" style="left:7px;top:129.5px;width:900px;height:378.5px;border-top:4px solid #0a7cf0">
<span class="tx" style="left:17px;top:12px;font-size:16px;letter-spacing:-0.75px;color:#6c757d">All Users</span>
<svg class="ic" style="left:95px;top:11px;width:18px;height:18px;color:#343a40;"><use href="#i-dl"/></svg>
<span class="tx" style="left:21px;top:66px;font-size:15.5px;color:#495057">Show</span>
<div class="sel" style="left:62px;top:61px;width:56px;height:29px"><span class="tx" style="left:9px;top:6px;font-size:11px;color:#495057">5</span><span class="tx" style="left:38px;top:4px;font-size:10px;color:#495057;line-height:10px">&#9650;<br>&#9660;</span></div>
<div class="hr" style="left:22px;top:105px;width:860px"></div>
<span class="tx" style="left:32px;top:122px;font-size:15px;font-weight:bold;color:#212529">#</span>
<span class="tx" style="left:97px;top:122px;font-size:15px;font-weight:bold;color:#212529">User</span>
<div class="hr" style="left:22px;top:156px;width:860px;border-top-width:2px"></div>
<span class="tx" style="left:32px;top:174px;font-size:15px;color:#212529">1</span>
<svg class="ic" style="left:98px;top:168.5px;width:54px;height:54px"><use href="#i-woman2"/></svg>
<div class="hr" style="left:22px;top:232px;width:860px"></div>
<span class="tx" style="left:32px;top:249px;font-size:15px;color:#212529">2</span>
<svg class="ic" style="left:98px;top:243px;width:54px;height:54px"><use href="#i-woman"/></svg>
<span class="tx" style="left:21px;top:332px;font-size:15.5px;color:#495057">Showing 1 to 2 of 2 entries</span>
</div>
</div>
<div class="sb" style="height:600px"><div class="brand"><div style="position:absolute;left:19px;top:10px;width:35px;height:35px;border-radius:50%;background:#26292d;box-shadow:0 2px 4px rgba(0,0,0,.4)"></div><svg class="ic" style="left:20px;top:9px;width:34px;height:34px;"><use href="#i-logo"/></svg><span class="bt">Alumnius</span></div><div class="nav"><div class="it act"><svg class="ic" style="left:19px;top:9.5px;width:21px;height:21px;"><use href="#i-dash"/></svg><span class="t">Dashboard</span></div><div class="it user"><svg class="ic" style="left:14px;top:6px;width:34px;height:34px;"><use href="#i-man"/></svg><span class="t" style="left:62px">Mr. Super Admin</span><svg class="ic" style="left:190px;top:13px;width:14px;height:14px;"><use href="#i-left"/></svg></div><div class="it"><svg class="ic" style="left:19px;top:9.5px;width:21px;height:21px;"><use href="#i-blog"/></svg><span class="t">Blog</span><svg class="ic" style="left:209px;top:13px;width:14px;height:14px;"><use href="#i-left"/></svg></div><div class="it"><svg class="ic" style="left:19px;top:9.5px;width:21px;height:21px;"><use href="#i-card"/></svg><span class="t">My Payments</span><svg class="ic" style="left:209px;top:13px;width:14px;height:14px;"><use href="#i-left"/></svg></div><div class="it"><svg class="ic" style="left:19px;top:9.5px;width:21px;height:21px;"><use href="#i-video"/></svg><span class="t">Videos</span><svg class="ic" style="left:209px;top:13px;width:14px;height:14px;"><use href="#i-left"/></svg></div><div class="it"><svg class="ic" style="left:19px;top:9.5px;width:21px;height:21px;"><use href="#i-quest"/></svg><span class="t">Questions</span><svg class="ic" style="left:209px;top:13px;width:14px;height:14px;"><use href="#i-left"/></svg></div><div class="it"><svg class="ic" style="left:19px;top:9.5px;width:21px;height:21px;"><use href="#i-users"/></svg><span class="t">Committee</span><svg class="ic" style="left:209px;top:13px;width:14px;height:14px;"><use href="#i-left"/></svg></div><div class="it"><svg class="ic" style="left:19px;top:9.5px;width:21px;height:21px;"><use href="#i-cal"/></svg><span class="t">Events</span><svg class="ic" style="left:209px;top:13px;width:14px;height:14px;"><use href="#i-left"/></svg></div><div class="it"><svg class="ic" style="left:19px;top:9.5px;width:21px;height:21px;"><use href="#i-clip"/></svg><span class="t">Notice</span><svg class="ic" style="left:209px;top:13px;width:14px;height:14px;"><use href="#i-left"/></svg></div><div class="it"><svg class="ic" style="left:19px;top:9.5px;width:21px;height:21px;"><use href="#i-receipt"/></svg><span class="t">Receipts</span><svg class="ic" style="left:209px;top:13px;width:14px;height:14px;"><use href="#i-left"/></svg></div><div class="it act"><svg class="ic" style="left:19px;top:9.5px;width:21px;height:21px;"><use href="#i-users"/></svg><span class="t">User Management</span><svg class="ic" style="left:209px;top:13px;width:14px;height:14px;"><use href="#i-down"/></svg></div><div class="it sub"><svg class="ic" style="left:19px;top:9.5px;width:21px;height:21px;"><use href="#i-list"/></svg><span class="t">User List</span></div></div></div>
</div>
<div class="ss" style="left:617.5px;top:259.2px;width:800px;height:1555px;transform:scale(0.1976);background:#f4f6f9">
<div class="main" style="left:250px"><div class="nb" style="height:59px"><svg class="ic" style="left:23px;top:19px;width:17px;height:17px;color:#6c757d;"><use href="#i-ham"/></svg><svg class="ic" style="left:68px;top:19px;width:19px;height:19px;color:#495057;"><use href="#i-mail"/></svg><div class="badge"></div></div>
<div class="h1" style="left:14px;top:78px;font-size:27px">User Registration</div>
<div class="card" style="left:276px;top:129px;width:600px;height:1346px"><div class="inp" style="left:17px;top:25px;width:560px;height:36px"><span class="tx" style="left:10px;top:8px;font-size:14px;color:#6c757d">Mr.</span></div><span class="tx" style="left:22px;top:81.6px;font-size:15px;font-weight:bold;color:#212529">Picture <b style="color:#dc3545">*</b></span><div class="inp" style="left:17px;top:105.6px;width:560px;height:38px"><span class="tx" style="left:10px;top:9px;font-size:14px;color:#6c757d">Choose</span></div><span class="tx" style="left:22px;top:166.6px;font-size:15px;font-weight:bold;color:#212529">Mobile <b style="color:#dc3545">*</b></span><div class="inp" style="left:17px;top:190.6px;width:560px;height:38px"><span class="tx" style="left:10px;top:9px;font-size:14px;color:#6c757d">e.g. 01711111111</span></div><span class="tx" style="left:22px;top:251.60000000000002px;font-size:15px;font-weight:bold;color:#212529">Email <b style="color:#dc3545">*</b></span><div class="inp" style="left:17px;top:275.6px;width:560px;height:38px"><span class="tx" style="left:10px;top:9px;font-size:14px;color:#6c757d">e.g. info@alumnius.com</span></div><span class="tx" style="left:22px;top:339px;font-size:15px;font-weight:bold;color:#212529">Password <b style="color:#dc3545">*</b></span><div class="inp" style="left:17px;top:363px;width:560px;height:38px"><span class="tx" style="left:10px;top:9px;font-size:14px;color:#6c757d">Select</span></div><span class="tx" style="left:22px;top:424.6px;font-size:15px;font-weight:bold;color:#212529">Gender <b style="color:#dc3545">*</b></span><div class="inp" style="left:17px;top:448.6px;width:560px;height:38px"><span class="tx" style="left:10px;top:9px;font-size:14px;color:#6c757d">Male</span></div><span class="tx" style="left:22px;top:510.6px;font-size:15px;font-weight:bold;color:#212529">Registration <b style="color:#dc3545">*</b></span><div class="inp" style="left:17px;top:534.6px;width:560px;height:38px"><span class="tx" style="left:10px;top:9px;font-size:14px;color:#6c757d">Put your registration</span></div><span class="tx" style="left:22px;top:594.6px;font-size:15px;font-weight:bold;color:#212529">Academic <b style="color:#dc3545">*</b></span><div class="inp" style="left:17px;top:618.6px;width:560px;height:38px"><span class="tx" style="left:10px;top:9px;font-size:14px;color:#6c757d">Select</span></div><span class="tx" style="left:22px;top:685px;font-size:15px;font-weight:bold;color:#212529">Faculty <b style="color:#dc3545">*</b></span><div class="inp" style="left:17px;top:709px;width:560px;height:38px"><span class="tx" style="left:10px;top:9px;font-size:14px;color:#6c757d">Select</span></div><span class="tx" style="left:22px;top:770px;font-size:15px;font-weight:bold;color:#212529">Graduation <b style="color:#dc3545">*</b></span><div class="inp" style="left:17px;top:794px;width:560px;height:38px"><span class="tx" style="left:10px;top:9px;font-size:14px;color:#6c757d">Select</span></div><span class="tx" style="left:22px;top:854px;font-size:15px;font-weight:bold;color:#212529">Hall of Residence <b style="color:#dc3545">*</b></span><div class="inp" style="left:17px;top:878px;width:560px;height:38px"><span class="tx" style="left:10px;top:9px;font-size:14px;color:#6c757d">Select</span></div><span class="tx" style="left:22px;top:939.6px;font-size:15px;font-weight:bold;color:#212529">Occupation <b style="color:#dc3545">*</b></span><div class="inp" style="left:17px;top:963.6px;width:560px;height:38px"><span class="tx" style="left:10px;top:9px;font-size:14px;color:#6c757d"></span></div><span class="tx" style="left:22px;top:1049px;font-size:15px;font-weight:bold;color:#212529">Organization <b style="color:#dc3545">*</b></span><div class="inp" style="left:17px;top:1073px;width:560px;height:38px"><span class="tx" style="left:10px;top:9px;font-size:14px;color:#6c757d"></span></div><span class="tx" style="left:22px;top:1162px;font-size:15px;font-weight:bold;color:#212529">Designation <b style="color:#dc3545">*</b></span><div class="inp" style="left:17px;top:1186px;width:560px;height:38px"><span class="tx" style="left:10px;top:9px;font-size:14px;color:#6c757d"></span></div><div class="btn" style="left:17px;top:1263px;width:90px;height:46px;font-size:15px;line-height:46px">Register</div></div>
<div class="foot" style="top:1478px;height:77px"><span class="tx" style="left:15px;top:33px;font-size:14px;color:#869099;font-weight:bold">Copyright © 2020 | <b style="color:#3d8fe8;font-weight:normal">Alumnius</b> | All rights reserved</span></div>
</div>
<div class="sb" style="height:1555px"><div class="brand"><div style="position:absolute;left:19px;top:10px;width:35px;height:35px;border-radius:50%;background:#26292d;box-shadow:0 2px 4px rgba(0,0,0,.4)"></div><svg class="ic" style="left:20px;top:9px;width:34px;height:34px;"><use href="#i-logo"/></svg><span class="bt">Alumnius</span></div><div class="nav"><div class="it act"><svg class="ic" style="left:19px;top:9.5px;width:21px;height:21px;"><use href="#i-dash"/></svg><span class="t">Dashboard</span></div><div class="it user"><svg class="ic" style="left:14px;top:6px;width:34px;height:34px;"><use href="#i-man"/></svg><span class="t" style="left:62px">Mr. Super Admin</span><svg class="ic" style="left:190px;top:13px;width:14px;height:14px;"><use href="#i-left"/></svg></div><div class="it"><svg class="ic" style="left:19px;top:9.5px;width:21px;height:21px;"><use href="#i-blog"/></svg><span class="t">Blog</span><svg class="ic" style="left:209px;top:13px;width:14px;height:14px;"><use href="#i-left"/></svg></div><div class="it"><svg class="ic" style="left:19px;top:9.5px;width:21px;height:21px;"><use href="#i-card"/></svg><span class="t">My Payments</span><svg class="ic" style="left:209px;top:13px;width:14px;height:14px;"><use href="#i-left"/></svg></div><div class="it"><svg class="ic" style="left:19px;top:9.5px;width:21px;height:21px;"><use href="#i-video"/></svg><span class="t">Videos</span><svg class="ic" style="left:209px;top:13px;width:14px;height:14px;"><use href="#i-left"/></svg></div><div class="it"><svg class="ic" style="left:19px;top:9.5px;width:21px;height:21px;"><use href="#i-quest"/></svg><span class="t">Questions</span><svg class="ic" style="left:209px;top:13px;width:14px;height:14px;"><use href="#i-left"/></svg></div><div class="it"><svg class="ic" style="left:19px;top:9.5px;width:21px;height:21px;"><use href="#i-users"/></svg><span class="t">Committee</span><svg class="ic" style="left:209px;top:13px;width:14px;height:14px;"><use href="#i-left"/></svg></div><div class="it"><svg class="ic" style="left:19px;top:9.5px;width:21px;height:21px;"><use href="#i-cal"/></svg><span class="t">Events</span><svg class="ic" style="left:209px;top:13px;width:14px;height:14px;"><use href="#i-left"/></svg></div><div class="it"><svg class="ic" style="left:19px;top:9.5px;width:21px;height:21px;"><use href="#i-clip"/></svg><span class="t">Notice</span><svg class="ic" style="left:209px;top:13px;width:14px;height:14px;"><use href="#i-left"/></svg></div><div class="it"><svg class="ic" style="left:19px;top:9.5px;width:21px;height:21px;"><use href="#i-receipt"/></svg><span class="t">Receipts</span><svg class="ic" style="left:209px;top:13px;width:14px;height:14px;"><use href="#i-left"/></svg></div><div class="it act"><svg class="ic" style="left:19px;top:9.5px;width:21px;height:21px;"><use href="#i-users"/></svg><span class="t">User Management</span><svg class="ic" style="left:209px;top:13px;width:14px;height:14px;"><use href="#i-down"/></svg></div><div class="it"><svg class="ic" style="left:19px;top:9.5px;width:21px;height:21px;"><use href="#i-list"/></svg><span class="t">User List</span></div><div class="it sub"><svg class="ic" style="left:19px;top:9.5px;width:21px;height:21px;"><use href="#i-ucirc"/></svg><span class="t">User Registration</span></div><div class="it"><svg class="ic" style="left:19px;top:9.5px;width:21px;height:21px;"><use href="#i-friends"/></svg><span class="t">Membership</span><svg class="ic" style="left:209px;top:13px;width:14px;height:14px;"><use href="#i-left"/></svg></div><div class="it"><svg class="ic" style="left:19px;top:9.5px;width:21px;height:21px;"><use href="#i-build"/></svg><span class="t">Job Opportunities</span><svg class="ic" style="left:209px;top:13px;width:14px;height:14px;"><use href="#i-left"/></svg></div><div class="it"><svg class="ic" style="left:19px;top:9.5px;width:21px;height:21px;"><use href="#i-cogs"/></svg><span class="t">Settings</span><svg class="ic" style="left:209px;top:13px;width:14px;height:14px;"><use href="#i-left"/></svg></div><div class="it"><svg class="ic" style="left:19px;top:9.5px;width:21px;height:21px;"><use href="#i-stream"/></svg><span class="t">Categories</span><svg class="ic" style="left:209px;top:13px;width:14px;height:14px;"><use href="#i-left"/></svg></div><div class="it"><svg class="ic" style="left:19px;top:9.5px;width:21px;height:21px;"><use href="#i-acct"/></svg><span class="t">Accounts</span><svg class="ic" style="left:209px;top:13px;width:14px;height:14px;"><use href="#i-left"/></svg></div></div></div>
</div>
<div class="ss s3" style="left:737px;top:155px;width:680px;height:1211px;transform:scale(0.388);background:#f4f6f9">
<div class="main" style="left:250px;height:1106px"><div class="nb" style="height:55px"><svg class="ic" style="left:23px;top:19px;width:17px;height:17px;color:#6c757d;"><use href="#i-ham"/></svg><svg class="ic" style="left:68px;top:19px;width:19px;height:19px;color:#495057;"><use href="#i-mail"/></svg><div class="badge"></div></div>
<div class="h1" style="left:15px;top:75.5px;font-size:26.3px">My Profile</div>
<div class="card" style="left:7.5px;top:130px;width:402px;height:433px;border-top:3.5px solid #007bff"><svg class="ic" style="left:151px;top:20px;width:100px;height:100px;"><use href="#i-man"/></svg><div class="ctr" style="top:125px;font-size:18.3px;color:#495057;font-weight:bold">Mr. Super Admin</div><div class="ctr" style="top:159px;font-size:14.5px;color:#6c757d">No Data Found</div><div class="hr" style="left:20px;top:196px;width:361px"></div><div class="hr" style="left:20px;top:245px;width:361px"></div><div class="hr" style="left:20px;top:294px;width:361px"></div><div class="hr" style="left:20px;top:343px;width:361px"></div><div class="hr" style="left:20px;top:393px;width:361px"></div><span class="tx" style="left:20px;top:214px;font-size:14.5px;font-weight:bold;color:#212529">Registration ID :</span><span class="tx" style="right:21px;top:214px;font-size:14.5px;color:#495057">4353456</span><span class="tx" style="left:20px;top:263px;font-size:14.5px;font-weight:bold;color:#212529">Email :</span><span class="tx" style="right:21px;top:263px;font-size:14.5px;color:#495057">superadmin@Alumnius.com</span><span class="tx" style="left:20px;top:312px;font-size:14.5px;font-weight:bold;color:#212529">Membership Category :</span><span class="tx" style="right:21px;top:312px;font-size:14.5px;color:#495057">01711111111</span><span class="tx" style="left:20px;top:361px;font-size:14.5px;font-weight:bold;color:#212529">Renewable Date :</span><span class="tx" style="right:21px;top:361px;font-size:14.5px;color:#495057">No Data Found</span></div>
<div class="card" style="left:7.5px;top:579px;width:402px;height:446px;overflow:hidden"><div class="phead"><span class="tx" style="left:20px;top:13px;font-size:16.3px;color:#fff">Privacy Settings</span></div><div class="hr" style="left:20px;top:66px;width:361px"></div><span class="tx" style="left:32px;top:84px;font-size:14.5px;font-weight:bold;color:#212529">Donate Blood ?</span><div class="tog" style="left:304px;top:82px"><span>Ye</span></div><div class="hr" style="left:20px;top:117px;width:361px"></div><span class="tx" style="left:32px;top:135px;font-size:14.5px;font-weight:bold;color:#212529">Hide Email ?</span><div class="tog" style="left:304px;top:133px"><span>Ye</span></div><div class="hr" style="left:20px;top:168px;width:361px"></div><span class="tx" style="left:32px;top:186px;font-size:14.5px;font-weight:bold;color:#212529">Hide Phone Number ?</span><div class="tog" style="left:304px;top:184px"><span>Ye</span></div><div class="hr" style="left:20px;top:219px;width:361px"></div><span class="tx" style="left:32px;top:237px;font-size:14.5px;font-weight:bold;color:#212529">Job Seeker ?</span><div class="tog" style="left:304px;top:235px"><span>Ye</span></div><div class="hr" style="left:20px;top:270px;width:361px"></div><span class="tx" style="left:32px;top:288px;font-size:14.5px;font-weight:bold;color:#212529">Employer ?</span><div class="tog" style="left:304px;top:286px"><span>Ye</span></div><div class="hr" style="left:20px;top:321px;width:361px"></div><span class="tx" style="left:32px;top:339px;font-size:14.5px;font-weight:bold;color:#212529">Hide Location ?</span><div class="tog off" style="left:304px;top:337px"><span>No</span></div><div class="btn" style="left:20px;top:388px;width:361px;height:38px;font-size:15px;line-height:38px;text-align:center">Update</div></div>
<div class="card" style="left:425px;top:130px;width:402px;height:895px"></div>
<div class="foot" style="top:889px;height:61px;top:1044px"><span class="tx" style="left:15px;top:19px;font-size:14.5px;color:#869099;font-weight:bold">Copyright © 2020 | <b style="color:#3d8fe8;font-weight:normal">Alumnius</b> | All rights reserved</span></div>
</div>
<div class="sb" style="height:1106px"><div class="brand"><div style="position:absolute;left:19px;top:10px;width:35px;height:35px;border-radius:50%;background:#26292d;box-shadow:0 2px 4px rgba(0,0,0,.4)"></div><svg class="ic" style="left:20px;top:9px;width:34px;height:34px;"><use href="#i-logo"/></svg><span class="bt">Alumnius</span></div><div class="nav"><div class="it act"><svg class="ic" style="left:19px;top:9.5px;width:21px;height:21px;"><use href="#i-dash"/></svg><span class="t">Dashboard</span></div><div class="it user act"><svg class="ic" style="left:14px;top:6px;width:34px;height:34px;"><use href="#i-man"/></svg><span class="t" style="left:62px">Mr. Super Admin</span><svg class="ic" style="left:190px;top:14px;width:14px;height:14px;"><use href="#i-down"/></svg></div><div class="it sub"><svg class="ic" style="left:19px;top:9.5px;width:21px;height:21px;"><use href="#i-user"/></svg><span class="t">My Profile</span></div><div class="it"><svg class="ic" style="left:19px;top:9.5px;width:21px;height:21px;"><use href="#i-id"/></svg><span class="t">My Id Card</span></div><div class="it"><svg class="ic" style="left:19px;top:9.5px;width:21px;height:21px;"><use href="#i-power"/></svg><span class="t">Logout</span></div><div class="it"><svg class="ic" style="left:19px;top:9.5px;width:21px;height:21px;"><use href="#i-blog"/></svg><span class="t">Blog</span><svg class="ic" style="left:209px;top:13px;width:14px;height:14px;"><use href="#i-left"/></svg></div><div class="it"><svg class="ic" style="left:19px;top:9.5px;width:21px;height:21px;"><use href="#i-card"/></svg><span class="t">My Payments</span><svg class="ic" style="left:209px;top:13px;width:14px;height:14px;"><use href="#i-left"/></svg></div><div class="it"><svg class="ic" style="left:19px;top:9.5px;width:21px;height:21px;"><use href="#i-video"/></svg><span class="t">Videos</span><svg class="ic" style="left:209px;top:13px;width:14px;height:14px;"><use href="#i-left"/></svg></div><div class="it"><svg class="ic" style="left:19px;top:9.5px;width:21px;height:21px;"><use href="#i-quest"/></svg><span class="t">Questions</span><svg class="ic" style="left:209px;top:13px;width:14px;height:14px;"><use href="#i-left"/></svg></div><div class="it"><svg class="ic" style="left:19px;top:9.5px;width:21px;height:21px;"><use href="#i-users"/></svg><span class="t">Committee</span><svg class="ic" style="left:209px;top:13px;width:14px;height:14px;"><use href="#i-left"/></svg></div><div class="it"><svg class="ic" style="left:19px;top:9.5px;width:21px;height:21px;"><use href="#i-cal"/></svg><span class="t">Events</span><svg class="ic" style="left:209px;top:13px;width:14px;height:14px;"><use href="#i-left"/></svg></div><div class="it"><svg class="ic" style="left:19px;top:9.5px;width:21px;height:21px;"><use href="#i-clip"/></svg><span class="t">Notice</span><svg class="ic" style="left:209px;top:13px;width:14px;height:14px;"><use href="#i-left"/></svg></div><div class="it"><svg class="ic" style="left:19px;top:9.5px;width:21px;height:21px;"><use href="#i-receipt"/></svg><span class="t">Receipts</span><svg class="ic" style="left:209px;top:13px;width:14px;height:14px;"><use href="#i-left"/></svg></div><div class="it"><svg class="ic" style="left:19px;top:9.5px;width:21px;height:21px;"><use href="#i-users"/></svg><span class="t">User Management</span><svg class="ic" style="left:209px;top:13px;width:14px;height:14px;"><use href="#i-left"/></svg></div><div class="it"><svg class="ic" style="left:19px;top:9.5px;width:21px;height:21px;"><use href="#i-friends"/></svg><span class="t">Membership</span><svg class="ic" style="left:209px;top:13px;width:14px;height:14px;"><use href="#i-left"/></svg></div><div class="it"><svg class="ic" style="left:19px;top:9.5px;width:21px;height:21px;"><use href="#i-build"/></svg><span class="t">Job Opportunities</span><svg class="ic" style="left:209px;top:13px;width:14px;height:14px;"><use href="#i-left"/></svg></div><div class="it"><svg class="ic" style="left:19px;top:9.5px;width:21px;height:21px;"><use href="#i-cogs"/></svg><span class="t">Settings</span><svg class="ic" style="left:209px;top:13px;width:14px;height:14px;"><use href="#i-left"/></svg></div><div class="it"><svg class="ic" style="left:19px;top:9.5px;width:21px;height:21px;"><use href="#i-stream"/></svg><span class="t">Categories</span><svg class="ic" style="left:209px;top:13px;width:14px;height:14px;"><use href="#i-left"/></svg></div><div class="it"><svg class="ic" style="left:19px;top:9.5px;width:21px;height:21px;"><use href="#i-acct"/></svg><span class="t">Accounts</span><svg class="ic" style="left:209px;top:13px;width:14px;height:14px;"><use href="#i-left"/></svg></div></div></div>
</div>
</body></html>
